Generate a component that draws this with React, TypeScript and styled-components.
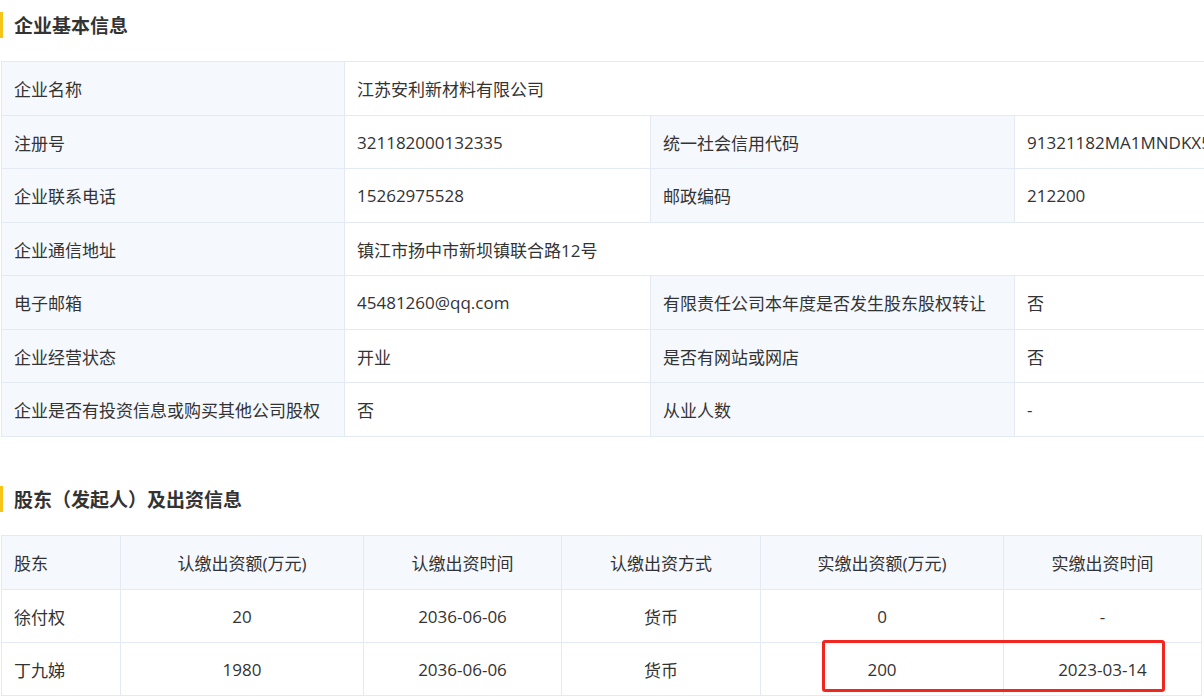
import React from "react";
import styled, { createGlobalStyle } from "styled-components";

const Global = createGlobalStyle`
  html, body { margin: 0; padding: 0; background: #fff; overflow: hidden; }
  body { font-family: "Open Sans", "Noto Sans CJK SC", sans-serif; color: #333; }
`;

const Page = styled.div`
  width: 1400px;
  padding: 0 0 0 1px;
`;

const Title = styled.h2<{ $top: number }>`
  margin: ${(p) => p.$top}px 0 0 -1px;
  height: 26px;
  display: flex;
  align-items: center;
  padding-left: 11px;
  border-left: 3px solid #f5c518;
  font-family: "Noto Sans CJK SC", sans-serif;
  font-size: 19px;
  font-weight: bold;
  color: #333;
  line-height: 22px;
`;

const Table = styled.table<{ $top: number; $w: number }>`
  margin-top: ${(p) => p.$top}px;
  border-collapse: collapse;
  table-layout: fixed;
  width: ${(p) => p.$w}px;
  font-size: 17px;
`;

const Col = styled.col<{ $w: number }>`
  width: ${(p) => p.$w}px;
`;

const Cell = styled.td<{ $label?: boolean; $center?: boolean; $h: number }>`
  border: 1px solid #e4eaf3;
  height: ${(p) => p.$h}px;
  padding: 0 12px;
  box-sizing: border-box;
  background: ${(p) => (p.$label ? "#f5f8fd" : "#fff")};
  text-align: ${(p) => (p.$center ? "center" : "left")};
  white-space: nowrap;
  overflow: hidden;
  color: #333;
`;

const Highlight = styled.div`
  position: absolute;
  left: 822px;
  top: 640px;
  width: 337px;
  height: 46px;
  border: 3px solid #f2261f;
  border-radius: 3px;
  pointer-events: none;
`;

const rows1: [string, string, string?, string?][] = [
  ["企业名称", "江苏安利新材料有限公司"],
  ["注册号", "321182000132335", "统一社会信用代码", "91321182MA1MNDKX5J"],
  ["企业联系电话", "15262975528", "邮政编码", "212200"],
  ["企业通信地址", "镇江市扬中市新坝镇联合路12号"],
  ["电子邮箱", "45481260@qq.com", "有限责任公司本年度是否发生股东股权转让", "否"],
  ["企业经营状态", "开业", "是否有网站或网店", "否"],
  ["企业是否有投资信息或购买其他公司股权", "否", "从业人数", "-"],
];
const cols1 = [343, 306, 364, 287];

const head2 = ["股东", "认缴出资额(万元)", "认缴出资时间", "认缴出资方式", "实缴出资额(万元)", "实缴出资时间"];
const cols2 = [119, 243, 198, 199, 243, 198];
const rows2 = [
  ["徐付权", "20", "2036-06-06", "货币", "0", "-"],
  ["丁九娣", "1980", "2036-06-06", "货币", "200", "2023-03-14"],
];

export default function App() {
  return (
    <Page>
      <Global />
      <Title $top={12}>企业基本信息</Title>
      <Table $top={23} $w={1300}>
        <colgroup>
          {cols1.map((w, i) => <Col key={i} $w={w} />)}
        </colgroup>
        <tbody>
          {rows1.map((r, i) => (
            <tr key={i}>
              <Cell $label $h={i % 2 ? 53 : 54}>{r[0]}</Cell>
              {r.length === 2 ? (
                <Cell $h={i % 2 ? 53 : 54} colSpan={3}>{r[1]}</Cell>
              ) : (
                <>
                  <Cell $h={i % 2 ? 53 : 54}>{r[1]}</Cell>
                  <Cell $label $h={i % 2 ? 53 : 54}>{r[2]}</Cell>
                  <Cell $h={i % 2 ? 53 : 54}>{r[3]}</Cell>
                </>
              )}
            </tr>
          ))}
        </tbody>
      </Table>
      <Title $top={49}>股东（发起人）及出资信息</Title>
      <Table $top={23} $w={1200}>
        <colgroup>
          {cols2.map((w, i) => <Col key={i} $w={w} />)}
        </colgroup>
        <tbody>
          <tr>
            {head2.map((h, i) => (
              <Cell key={i} $label $center={i > 0} $h={54}>{h}</Cell>
            ))}
          </tr>
          {rows2.map((r, i) => (
            <tr key={i}>
              {r.map((c, j) => (
                <Cell key={j} $center={j > 0} $h={53}>{c}</Cell>
              ))}
            </tr>
          ))}
        </tbody>
      </Table>
      <Highlight />
    </Page>
  );
}
